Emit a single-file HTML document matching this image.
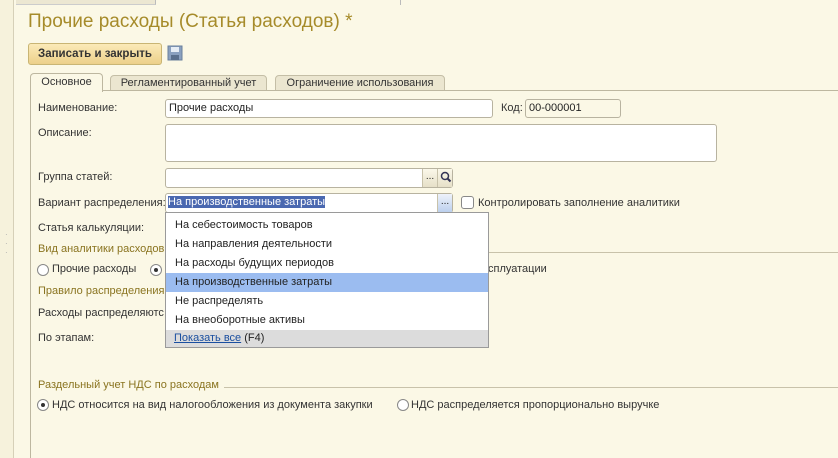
<!DOCTYPE html><html><head><meta charset="utf-8"><style>
*{box-sizing:border-box}
html,body{margin:0;width:838px;height:458px;overflow:hidden}
body{background:#fbf8e6;font-family:"Liberation Sans",Arial,sans-serif;font-size:11px;color:#333;position:relative}
.a{position:absolute;white-space:nowrap}
.inp{position:absolute;background:#fff;border:1px solid #b8b3a0;border-radius:3px;padding:2px 3px;font-size:11px;color:#222}
.gold{color:#8a7420}
.rad{position:absolute;width:12px;height:12px;border:1px solid #888;border-radius:50%;background:#fff}
.rad.on::after{content:"";position:absolute;left:3px;top:3px;width:4px;height:4px;border-radius:50%;background:#333}
.btn{position:absolute;width:15px;height:18px;background:linear-gradient(#fbf8ea,#e6e0c8);border-left:1px solid #c8c2aa;font-size:10px;text-align:center;line-height:16px}
.dd div{height:19px;line-height:19px;padding-left:9px}
</style></head><body>
<div class="a" style="left:0;top:0;width:14px;height:458px;background:#f6f2dc;border-right:1px solid #d6d0b8"></div>
<div class="a" style="left:16px;top:0;width:140px;height:5px;background:#ece7d2;border-right:1px solid #bbb;border-bottom:1px solid #ccc"></div>
<div class="a" style="left:400px;top:0;width:4px;height:5px;border-left:1px solid #bbb"></div>
<div class="a" style="left:5px;top:230px;color:#aaa;font-size:8px;line-height:9px">·<br>·<br>·</div>
<div class="a" style="left:28px;top:11px;font-size:19px;color:#a68b2a">Прочие расходы (Статья расходов) *</div>
<div class="a" style="left:28px;top:43px;width:134px;height:22px;border:1px solid #c9b574;border-radius:3px;background:linear-gradient(#fbeab8,#ecd08a);font-weight:bold;font-size:11.5px;color:#333;text-align:center;line-height:20px">Записать и закрыть</div>
<svg class="a" style="left:167px;top:45px" width="16" height="16"><rect x="1" y="1" width="14" height="14" fill="#8aa0bf" stroke="#6a7f9c"/><rect x="4" y="2" width="8" height="5" fill="#e6edf5"/><rect x="4" y="10" width="8" height="5" fill="#5a6f8c"/></svg>
<div class="a" style="left:110px;top:75px;width:157px;height:16px;background:#ebe6d0;border:1px solid #c4bea6;border-radius:4px 4px 0 0;text-align:center;line-height:15px">Регламентированный учет</div>
<div class="a" style="left:275px;top:75px;width:170px;height:16px;background:#ebe6d0;border:1px solid #c4bea6;border-radius:4px 4px 0 0;text-align:center;line-height:15px">Ограничение использования</div>
<div class="a" style="left:30px;top:90px;width:820px;height:380px;border-left:1px solid #bdb7a0;border-top:1px solid #bdb7a0"></div>
<div class="a" style="left:30px;top:73px;width:73px;height:19px;background:#fbf8e6;border:1px solid #bdb7a0;border-bottom:none;border-radius:4px 4px 0 0;text-align:center;line-height:17px;z-index:2">Основное</div>
<div class="a" style="left:38px;top:102px">Наименование:</div>
<div class="inp" style="left:165px;top:99px;width:328px;height:19px">Прочие расходы</div>
<div class="a" style="left:501px;top:102px">Код:</div>
<div class="inp" style="left:525px;top:99px;width:96px;height:19px;background:#fbf8e6">00-000001</div>
<div class="a" style="left:38px;top:127px">Описание:</div>
<div class="inp" style="left:165px;top:124px;width:552px;height:38px"></div>
<div class="a" style="left:38px;top:171px">Группа статей:</div>
<div class="inp" style="left:165px;top:168px;width:288px;height:20px;padding:0"><div class="btn" style="left:256px;top:0">...</div><div class="btn" style="left:271px;top:0"><svg width="13" height="16" style="margin-top:1px"><circle cx="6" cy="6" r="3.5" fill="none" stroke="#335" stroke-width="1.5"/><line x1="8.5" y1="8.5" x2="11.5" y2="11.5" stroke="#335" stroke-width="2"/></svg></div></div>
<div class="a" style="left:38px;top:197px">Вариант распределения:</div>
<div class="inp" style="left:165px;top:193px;width:288px;height:20px;padding:2px 2px"><span style="background:#4a68b0;color:#fff">На производственные затраты</span><div class="btn" style="left:271px;top:0;background:linear-gradient(#eef2fa,#bcd0ee)">...</div></div>
<div class="a" style="left:461px;top:196px;width:13px;height:13px;border:1px solid #888;border-radius:3px;background:#fff"></div>
<div class="a" style="left:478px;top:197px">Контролировать заполнение аналитики</div>
<div class="a" style="left:38px;top:222px">Статья калькуляции:</div>
<div class="a gold" style="left:38px;top:243px">Вид аналитики расходов</div>
<div class="a" style="left:165px;top:252px;width:680px;border-top:1px solid #c8c2aa"></div>
<div class="rad" style="left:37px;top:264px"></div><div class="a" style="left:52px;top:263px">Прочие расходы</div>
<div class="rad on" style="left:150px;top:264px"></div>
<div class="a" style="left:488px;top:263px">сплуатации</div>
<div class="a gold" style="left:38px;top:285px">Правило распределения</div>
<div class="a" style="left:38px;top:307px">Расходы распределяютс</div>
<div class="a" style="left:38px;top:332px">По этапам:</div>
<div class="a dd" style="left:165px;top:212px;width:324px;height:136px;background:#fff;border:1px solid #9a9a9a;font-size:11px;color:#222;padding-top:3px">
<div>На себестоимость товаров</div><div>На направления деятельности</div><div>На расходы будущих периодов</div><div style="background:#9bbcf0">На производственные затраты</div><div>Не распределять</div><div>На внеоборотные активы</div>
<div style="background:#dcdcdc;height:17px;line-height:16px;padding-left:8px"><span style="color:#1a4fa0;text-decoration:underline">Показать все</span> (F4)</div></div>
<div class="a gold" style="left:38px;top:379px">Раздельный учет НДС по расходам</div>
<div class="a" style="left:224px;top:387px;width:620px;border-top:1px solid #c8c2aa"></div>
<div class="rad on" style="left:37px;top:399px"></div><div class="a" style="left:52px;top:399px">НДС относится на вид налогообложения из документа закупки</div>
<div class="rad" style="left:397px;top:399px"></div><div class="a" style="left:411px;top:399px">НДС распределяется пропорционально выручке</div>
</body></html>
